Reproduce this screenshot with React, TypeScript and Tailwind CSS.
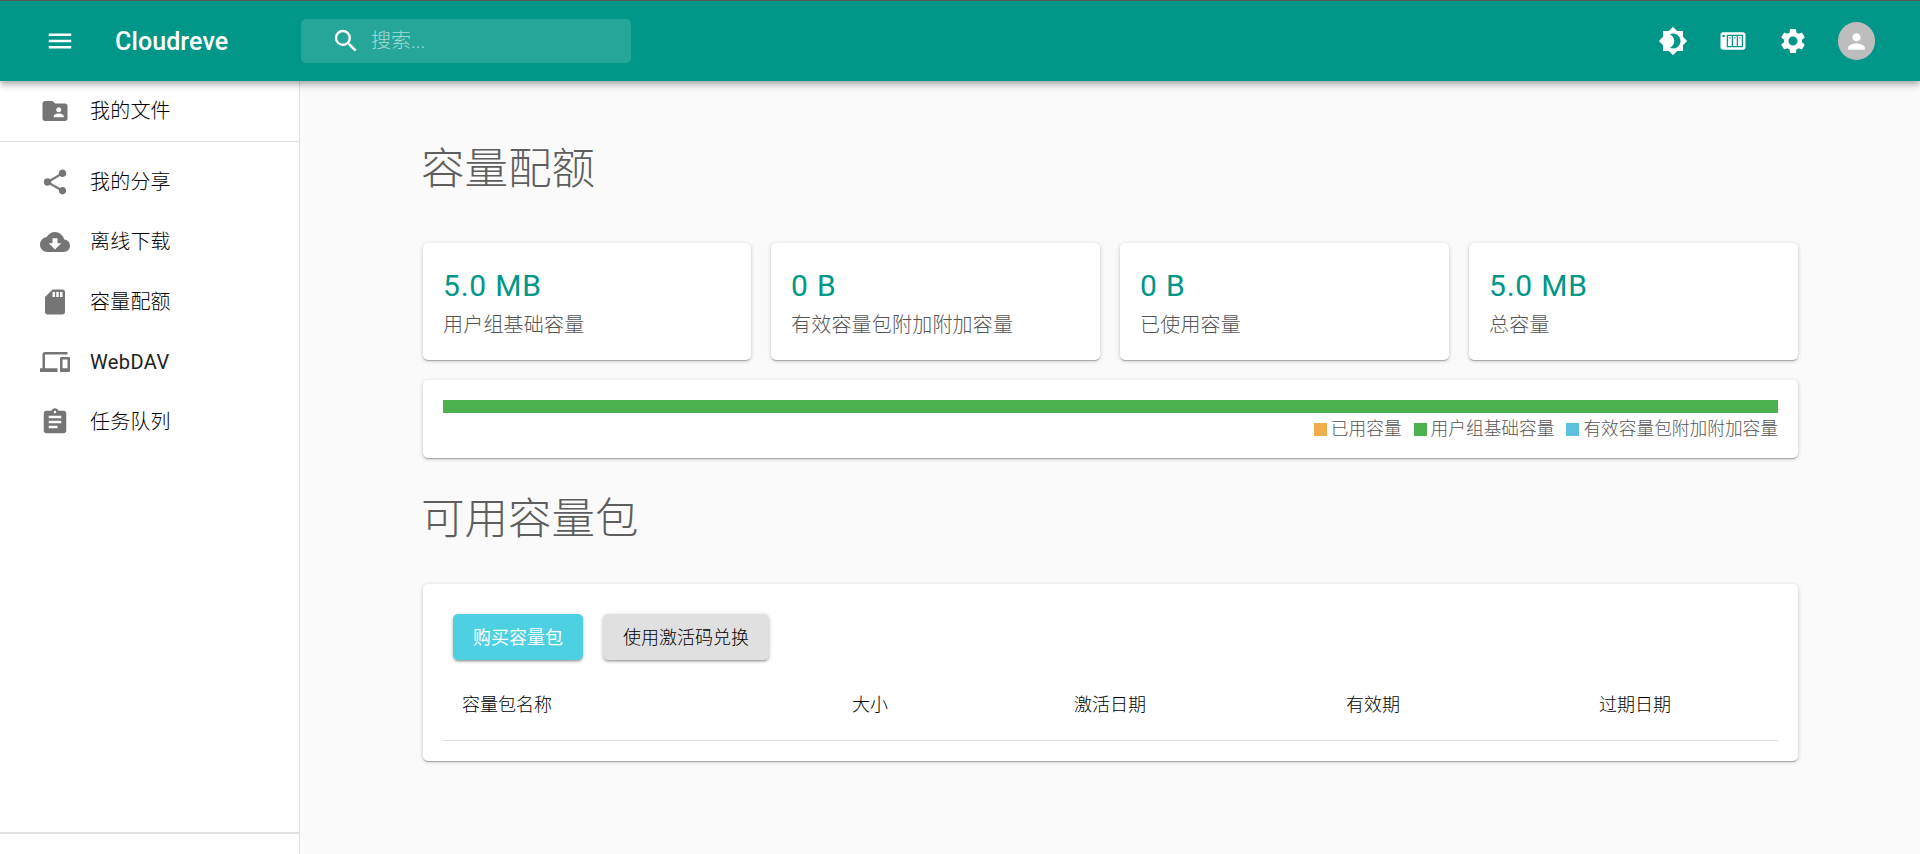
import React from "react";
import {
  MdMenu,
  MdSearch,
  MdBrightness4,
  MdSettings,
  MdPerson,
  MdFolderShared,
  MdShare,
  MdCloudDownload,
  MdSdStorage,
  MdDevices,
  MdAssignment,
} from "react-icons/md";

const FONT = "font-['Roboto','Noto_Sans_CJK_SC',sans-serif]";
const CARD =
  "rounded-[5px] bg-white shadow-[0_1px_4px_rgba(0,0,0,0.2),0_1px_1px_rgba(0,0,0,0.14),0_2px_1px_-1px_rgba(0,0,0,0.12)]";

function NasIcon() {
  return (
    <svg viewBox="0 0 24 24" className="h-[30px] w-[30px]" fill="currentColor">
      <path d="M4,5C2.89,5 2,5.89 2,7V17C2,18.11 2.89,19 4,19H20C21.11,19 22,18.11 22,17V7C22,5.89 21.11,5 20,5H4M4.5,7A1,1 0 0,1 5.5,8A1,1 0 0,1 4.5,9A1,1 0 0,1 3.5,8A1,1 0 0,1 4.5,7M7,7H20V17H7V7M8,8V16H11V8H8M12,8V16H15V8H12M16,8V16H19V8H16M9,9H10V10H9V9M13,9H14V10H13V9M17,9H18V10H17V9Z" />
    </svg>
  );
}

function NavItem({ icon, label }: { icon: React.ReactNode; label: string }) {
  return (
    <div className="flex h-[60px] items-center pl-[40px]">
      <div className="flex w-[50px] text-[30px] text-[#757575]">{icon}</div>
      <span className="text-[20px] font-light tracking-[0.01em] text-black">{label}</span>
    </div>
  );
}

function Stat({ value, label }: { value: string; label: string }) {
  return (
    <div className={`${CARD} flex h-[117px] flex-col px-[20px] pt-[23px]`}>
      <div className="h-[40px] text-[30px] leading-[40px] tracking-[0.8px] text-[#009688]">{value}</div>
      <div className="mt-[4px] text-[20px] font-light leading-[30px] tracking-[0.01em] text-[#555]">{label}</div>
    </div>
  );
}

function Legend({ color, label }: { color: string; label: string }) {
  return (
    <div className="flex items-center gap-[4px]">
      <span className={`h-[13px] w-[13px] ${color}`} />
      <span className="text-[17.7px] font-light leading-[20px] text-[#555]">{label}</span>
    </div>
  );
}

export default function App() {
  return (
    <div className={`${FONT} flex h-[854px] flex-col overflow-hidden bg-[#fafafa]`}>
      <header className="relative z-10 flex h-[81px] shrink-0 items-center border-t border-t-[#555] bg-[#009688] text-white shadow-[0_2px_5px_-1px_rgba(0,0,0,0.2),0_5px_6px_0_rgba(0,0,0,0.14),0_1px_12px_0_rgba(0,0,0,0.12)]">
        <div className="ml-[45px] flex w-[70px] text-[30px]">
          <MdMenu />
        </div>
        <div className="w-[186px] text-[25px] font-medium leading-none tracking-[0.1px]">Cloudreve</div>
        <div className="flex h-[44px] w-[330px] items-center rounded-[5px] bg-white/15 pl-[30px]">
          <MdSearch className="text-[30px]" />
          <span className="ml-[10px] text-[20px] font-light text-white/60">搜索...</span>
        </div>
        <div className="ml-auto mr-[45px] flex items-center">
          <div className="flex w-[60px] justify-center text-[30px]">
            <MdBrightness4 />
          </div>
          <div className="flex w-[60px] justify-center">
            <NasIcon />
          </div>
          <div className="flex w-[60px] justify-center text-[30px]">
            <MdSettings />
          </div>
          <div className="ml-[15px] flex h-[38px] w-[37px] items-center justify-center rounded-full bg-[#bdbdbd] text-[25px]">
            <MdPerson />
          </div>
        </div>
      </header>

      <div className="flex min-h-0 flex-1">
        <aside className="flex w-[300px] shrink-0 flex-col border-r border-r-[#e0e0e0] bg-white">
          <NavItem icon={<MdFolderShared />} label="我的文件" />
          <div className="h-px bg-[#e0e0e0]" />
          <div className="pt-[10px]">
            <NavItem icon={<MdShare />} label="我的分享" />
            <NavItem icon={<MdCloudDownload />} label="离线下载" />
            <NavItem icon={<MdSdStorage />} label="容量配额" />
            <div className="flex h-[60px] items-center pl-[40px]">
              <div className="flex w-[50px] text-[30px] text-[#757575]">
                <MdDevices />
              </div>
              <span className="text-[20px] tracking-[0.02em] text-[#212121]">WebDAV</span>
            </div>
            <NavItem icon={<MdAssignment />} label="任务队列" />
          </div>
          <div className="mt-auto mb-[20px] h-[2px] bg-[#e0e0e0]" />
        </aside>

        <main className="flex-1 pl-[123px] pr-[122px] pt-[55px]">
          <h1 className="-ml-[2px] h-[68px] text-[43.5px] font-light leading-[68px] text-[#5e5e5e]">容量配额</h1>
          <div className="mt-[39px] grid grid-cols-[328px_329px_329px_329px] gap-[20px]">
            <Stat value="5.0 MB" label="用户组基础容量" />
            <Stat value="0 B" label="有效容量包附加附加容量" />
            <Stat value="0 B" label="已使用容量" />
            <Stat value="5.0 MB" label="总容量" />
          </div>

          <div className={`${CARD} mt-[20px] h-[78px] px-[20px] pt-[20px]`}>
            <div className="h-[13px] bg-[#4caf50]" />
            <div className="mt-[6px] flex justify-end gap-[12px]">
              <Legend color="bg-[#f0ad4e]" label="已用容量" />
              <Legend color="bg-[#4caf50]" label="用户组基础容量" />
              <Legend color="bg-[#5bc0de]" label="有效容量包附加附加容量" />
            </div>
          </div>

          <h2 className="-ml-[2px] mt-[28px] h-[68px] text-[43.5px] font-light leading-[68px] text-[#5e5e5e]">可用容量包</h2>

          <div className={`${CARD} mt-[30px] h-[177px] px-[20px] pt-[30px]`}>
            <div className="flex gap-[20px] pl-[10px]">
              <button className="flex h-[46px] w-[130px] items-center justify-center rounded-[5px] bg-[#4dd0e1] text-[18px] text-white shadow-[0_1px_4px_rgba(0,0,0,0.2),0_2px_2px_rgba(0,0,0,0.14),0_3px_1px_-2px_rgba(0,0,0,0.12)]">
                购买容量包
              </button>
              <button className="flex h-[46px] w-[166px] items-center justify-center rounded-[5px] bg-[#e0e0e0] text-[18px] font-light text-black shadow-[0_1px_4px_rgba(0,0,0,0.2),0_2px_2px_rgba(0,0,0,0.14),0_3px_1px_-2px_rgba(0,0,0,0.12)]">
                使用激活码兑换
              </button>
            </div>
            <div className="mt-[15px] grid h-[66px] grid-cols-[390px_222px_272px_253px_198px] items-center border-b border-b-[#e0e0e0] pb-[6px] text-[18px] font-light text-black">
              <span className="pl-[19px]">容量包名称</span>
              <span className="pl-[19px]">大小</span>
              <span className="pl-[19px]">激活日期</span>
              <span className="pl-[19px]">有效期</span>
              <span className="pl-[19px]">过期日期</span>
            </div>
          </div>
        </main>
      </div>
    </div>
  );
}
